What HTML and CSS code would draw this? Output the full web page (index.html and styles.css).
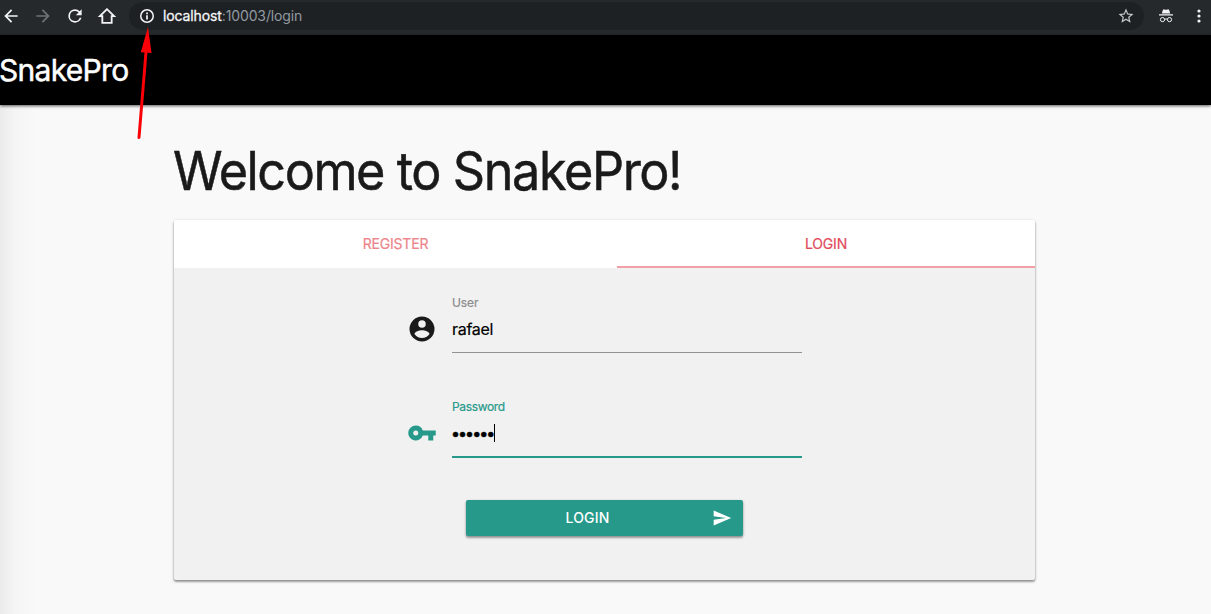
FILE: index.html
```html
<!DOCTYPE html>
<html lang="en">
<head>
<meta charset="utf-8">
<title>SnakePro</title>
<link rel="stylesheet" href="styles.css">
</head>
<body>
<header class="browser">
  <svg class="icon nav-icon" viewBox="0 0 24 24"><path d="M20 11H7.83l5.59-5.59L12 4l-8 8 8 8 1.41-1.41L7.83 13H20z"/></svg>
  <svg class="icon nav-icon dim" viewBox="0 0 24 24"><path d="M12 4l-1.41 1.41L16.17 11H4v2h12.17l-5.58 5.59L12 20l8-8z"/></svg>
  <svg class="icon nav-icon" viewBox="0 0 24 24"><path d="M17.65 6.35A7.96 7.96 0 0 0 12 4a8 8 0 1 0 7.73 10h-2.08A6 6 0 1 1 12 6c1.66 0 3.14.69 4.22 1.78L13 11h7V4z"/></svg>
  <svg class="icon nav-icon" viewBox="0 0 24 24"><path class="outline" d="M12 3.8L3.5 12.2H6.4V20.3H17.6V12.2H20.5z"/></svg>
  <div class="address">
    <svg class="icon info" viewBox="0 0 24 24"><path d="M11 17h2v-6h-2zm1-15.5a10.5 10.5 0 1 0 0 21 10.5 10.5 0 0 0 0-21zm0 18.7a8.2 8.2 0 1 1 0-16.4 8.2 8.2 0 0 1 0 16.4zM10.7 9.2h2.6V6.8h-2.6zM10.7 17.3h2.6V10.7h-2.6z"/></svg>
    <span class="url"><span class="host">localhost</span>:10003/login</span>
    <svg class="icon star" viewBox="0 0 24 24"><path d="M22 9.24l-7.19-.62L12 2 9.19 8.63 2 9.24l5.46 4.73L5.82 21 12 17.27 18.18 21l-1.63-7.03zM12 15.4l-3.76 2.27 1-4.28-3.32-2.88 4.38-.38L12 6.1l1.71 4.04 4.38.38-3.32 2.88 1 4.28z"/></svg>
  </div>
  <svg class="icon incognito" viewBox="0 0 14 14"><path d="M4 .6h2l1 .5 1-.5h2l1.2 3.8H2.8zM0 5.2h14v1.2H0z"/><g class="glasses"><circle cx="3.5" cy="10.6" r="2.1"/><circle cx="10.5" cy="10.6" r="2.1"/><path d="M5.6 10.3q1.4-.8 2.8 0"/></g></svg>
  <svg class="icon more" viewBox="0 0 4 14"><circle cx="2" cy="2" r="1.6"/><circle cx="2" cy="7" r="1.6"/><circle cx="2" cy="12" r="1.6"/></svg>
</header>
<nav class="navbar"><span class="brand">SnakePro</span></nav>
<main class="page">
  <h1 class="title">Welcome to SnakePro!</h1>
  <section class="card">
    <div class="tabs">
      <div class="tab"><span class="tab-label">REGISTER</span></div>
      <div class="tab active"><span class="tab-label">LOGIN</span></div>
    </div>
    <form class="form">
      <div class="field">
        <svg class="icon prefix" viewBox="0 0 24 24"><path d="M12 2a10 10 0 1 0 0 20 10 10 0 0 0 0-20zm0 3a3 3 0 1 1 0 6 3 3 0 0 1 0-6zm0 14.2a7.2 7.2 0 0 1-6-3.22c.03-1.99 4-3.08 6-3.08 1.99 0 5.97 1.09 6 3.08a7.2 7.2 0 0 1-6 3.22z"/></svg>
        <div class="control">
          <span class="label">User</span>
          <span class="value">rafael</span>
        </div>
      </div>
      <div class="field focused">
        <svg class="icon prefix" viewBox="0 0 24 24"><path d="M12.65 10A6 6 0 0 0 7 6a6 6 0 1 0 5.65 8H17v4h4v-4h2v-4zM7 14a2 2 0 1 1 0-4 2 2 0 0 1 0 4z"/></svg>
        <div class="control">
          <span class="label">Password</span>
          <span class="value"><span class="dots">••••••</span><span class="caret"></span></span>
        </div>
      </div>
      <div class="button">
        <span class="button-label">LOGIN</span>
        <svg class="icon send" viewBox="0 0 24 24"><path d="M2.01 21L23 12 2.01 3 2 10l15 2-15 2z"/></svg>
      </div>
    </form>
  </section>
</main>
<svg class="arrow" viewBox="0 0 20 114"><path class="shaft" d="M5 110.5L12 25"/><path class="head" d="M14 0L17.5 26L6.8 25.3z"/></svg>
</body>
</html>
```
FILE: styles.css
```css
* { box-sizing: border-box; }
body {
  margin: 0;
  height: 614px;
  overflow: hidden;
  display: flex;
  flex-direction: column;
  font-family: Inter, Roboto, sans-serif;
  background: #f9f9f9;
  color: #1a1a1a;
}
.icon { display: block; flex: none; fill: currentColor; }
.browser {
  flex: none;
  height: 35px;
  padding: 0 10px 3px 2px;
  display: flex;
  align-items: center;
  background: #25292c;
  color: #f1f3f4;
}
.nav-icon { width: 20px; height: 20px; margin-right: 12px; margin-left: -1px; }
.nav-icon + .nav-icon { margin-left: 0; }
.dim { color: #707376; }
.outline { fill: none; stroke: currentColor; stroke-width: 2.2; }
.address {
  width: 1015px;
  height: 28px;
  border-radius: 14px;
  padding: 0 10px;
  display: flex;
  align-items: center;
  background: #1e2124;
}
.info { width: 16px; height: 16px; }
.url { margin-left: 8px; flex: 1; font-size: 14px; line-height: 20px; letter-spacing: -0.12px; color: #9299a0; }
.host { color: #f4f5f6; -webkit-text-stroke: 0.3px #f4f5f6; }
.star { width: 18px; height: 18px; margin-right: -1px; color: #c3c7ca; }
.incognito { width: 14px; height: 14px; margin-left: 15px; }
.glasses { fill: none; stroke: currentColor; stroke-width: 1; }
.more { width: 4px; height: 14px; margin-left: auto; }
.navbar {
  flex: none;
  position: relative;
  z-index: 1;
  height: 70px;
  display: flex;
  align-items: center;
  background: #000;
  color: #fff;
  box-shadow: 0 1px 3px rgba(0, 0, 0, 0.65);
}
.brand { font-size: 30px; letter-spacing: -0.7px; margin-left: -1px; -webkit-text-stroke: 0.5px #fff; }
.page {
  flex: 1;
  padding: 31px 176px 34px 174px;
  background: linear-gradient(to right, #ebebeb, #f4f4f4 14px, #f9f9f9 36px);
}
.title {
  margin: 0 0 14px -1px;
  font-size: 53px;
  line-height: 70px;
  font-weight: 400;
  letter-spacing: -1.5px;
  white-space: nowrap;
  transform: scaleX(0.95);
  transform-origin: left;
  -webkit-text-stroke: 0.5px #1a1a1a;
}
.card {
  height: 360px;
  border-radius: 2px;
  background: #f1f1f1;
  box-shadow: 0 2px 2px rgba(0, 0, 0, 0.25), 0 1px 3px rgba(0, 0, 0, 0.3);
}
.tabs { height: 48px; display: grid; grid-template-columns: 443px 1fr; background: #fff; border-radius: 2px 2px 0 0; }
.tab { display: flex; align-items: center; justify-content: center; padding-bottom: 2px; font-size: 14px; letter-spacing: -0.2px; color: #ed858b; -webkit-text-stroke: 0.2px; }
.tab.active { color: #e14b5a; border-bottom: 2px solid #f2a0a6; padding-bottom: 0; }
.form { display: flex; flex-direction: column; padding-left: 233px; }
.field { display: flex; height: 104px; padding-top: 28px; }
.prefix { width: 30px; height: 30px; margin: 18px 15px 0 0; }
.control { width: 350px; height: 57px; display: flex; flex-direction: column; border-bottom: 1px solid #929292; }
.focused .control { height: 58px; border-bottom: 2px solid #26998a; }
.focused .prefix, .focused .label { color: #26998a; }
.label { font-size: 12px; line-height: 14px; letter-spacing: -0.1px; color: #8c8c8c; -webkit-text-stroke: 0.2px; }
.focused .label { letter-spacing: -0.35px; }
.value { margin-top: 7px; height: 24px; display: flex; align-items: center; font-size: 16px; letter-spacing: -0.3px; color: #000; -webkit-text-stroke: 0.2px; }
.dots { font-size: 16px; letter-spacing: -1.95px; margin-left: -1px; margin-right: 1px; -webkit-text-stroke: 0.5px #000; }
.caret { width: 1px; height: 18px; background: #000; }
.button {
  display: flex;
  align-items: center;
  width: 277px;
  height: 36px;
  margin: 24px 0 0 59px;
  padding: 0 11px 0 0;
  border-radius: 2px;
  background: #26998a;
  color: #fff;
  box-shadow: 0 2px 2px rgba(0, 0, 0, 0.25), 0 1px 3px rgba(0, 0, 0, 0.25);
}
.button-label { flex: 1; padding-bottom: 1px; text-align: center; font-size: 14px; font-weight: 500; letter-spacing: 0.2px; }
.send { width: 20px; height: 20px; margin-left: 3px; }
.arrow { position: absolute; z-index: 2; left: 134px; top: 27px; width: 20px; height: 114px; }
.shaft { fill: none; stroke: #fb0007; stroke-width: 3; stroke-linecap: round; }
.head { fill: #fb0007; }
```
